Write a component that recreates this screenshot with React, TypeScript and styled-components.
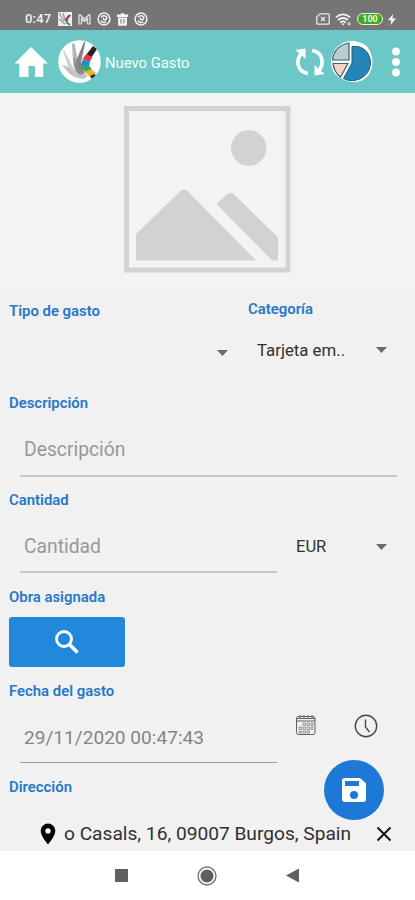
import React from "react";
import styled, { createGlobalStyle } from "styled-components";

const GlobalStyle = createGlobalStyle`
  * { box-sizing: border-box; }
  body { margin: 0; background: #fff; }
`;

const Screen = styled.div`
  width: 415px;
  height: 900px;
  display: flex;
  flex-direction: column;
  overflow: hidden;
  font-family: Roboto, "Liberation Sans", sans-serif;
  color: #303030;
`;

const StatusBar = styled.header`
  height: 30px;
  flex: none;
  background: #757575;
  color: #f4f4f4;
  display: flex;
  align-items: center;
  justify-content: space-between;
  padding: 8px 19px 0 25px;
`;

const StatusGroup = styled.div<{ $gap: number }>`
  display: flex;
  align-items: center;
  gap: ${(p) => p.$gap}px;
`;

const Clock = styled.span`
  font-size: 13px;
  font-weight: 500;
  letter-spacing: 0.2px;
  line-height: 16px;
  width: 27px;
  white-space: nowrap;
`;

const Battery = styled.span`
  width: 26px;
  height: 12px;
  border: 1.3px solid #e8f5e4;
  border-radius: 6px;
  background: #43a81b;
  background-clip: padding-box;
  color: #e8ffdc;
  font-size: 9px;
  font-weight: 700;
  line-height: 10px;
  text-align: center;
`;

const AppBar = styled.div`
  height: 63px;
  flex: none;
  background: #6cc8c6;
  display: flex;
  align-items: center;
  padding: 0 15px 0 14px;
`;

const Title = styled.h1`
  margin: 2px 0 0 4px;
  flex: 1;
  font-size: 14.8px;
  font-weight: 400;
  line-height: 20px;
  color: #f5fffe;
`;

const Form = styled.main`
  flex: 1;
  background: #f1f1f1;
  display: flex;
  flex-direction: column;
`;

const Photo = styled.div`
  height: 200px;
  flex: none;
  background: #f3f3f3;
  padding: 13px 0 0 124px;
`;

const Pair = styled.div`
  height: 99px;
  flex: none;
  display: grid;
  grid-template-columns: 239px 1fr;
`;

const Column = styled.div<{ $top: number }>`
  padding-top: ${(p) => p.$top}px;
`;

const Label = styled.div`
  height: 20px;
  padding-left: 9px;
  font-size: 14.9px;
  font-weight: 600;
  line-height: 22px;
  color: #2678cb;
`;

const Select = styled.div<{ $gap: number; $inset: number; $size: number }>`
  height: 22px;
  margin-top: ${(p) => p.$gap}px;
  padding: 0 ${(p) => p.$inset}px 0 18px;
  display: flex;
  align-items: center;
  justify-content: space-between;
  font-size: ${(p) => p.$size}px;
  line-height: 22px;
`;

const Section = styled.section<{ $height: number }>`
  height: ${(p) => p.$height}px;
  flex: none;
`;

const Row = styled.div`
  display: flex;
`;

const Input = styled.div<{ $width: number; $height?: number; $size?: number; $tone: string; $line: string; $thick: number }>`
  width: ${(p) => p.$width}px;
  height: ${(p) => p.$height ?? 65}px;
  flex: none;
  margin-left: 20px;
  padding: 27px 0 0 4px;
  border-bottom: ${(p) => p.$thick}px solid ${(p) => p.$line};
  font-size: ${(p) => p.$size ?? 19.3}px;
  line-height: 22px;
  color: ${(p) => p.$tone};
`;

const Currency = styled.div`
  flex: 1;
  padding: 5px 0 0 1px;
`;

const SearchButton = styled.button`
  width: 116px;
  height: 50px;
  margin: 11px 0 0 9px;
  padding: 0 0 1px;
  border: 0;
  border-radius: 3px;
  background: #2188db;
  display: flex;
  align-items: center;
  justify-content: center;
`;

const DateIcons = styled.div`
  flex: 1;
  display: flex;
  gap: 37px;
  padding: 14px 0 0 18px;
`;

const AddressArea = styled.section`
  flex: 1;
  position: relative;
`;

const Address = styled.div`
  height: 24px;
  margin-top: 26px;
  padding: 0 23px 0 40px;
  display: flex;
  align-items: center;
`;

const AddressText = styled.span`
  margin-left: 8px;
  flex: 1;
  font-size: 19.15px;
  line-height: 24px;
  white-space: nowrap;
`;

const SaveButton = styled.button`
  position: absolute;
  right: 31px;
  top: -16px;
  width: 60px;
  height: 60px;
  padding: 0;
  border: 0;
  border-radius: 50%;
  background: #1e78d8;
  display: flex;
  align-items: center;
  justify-content: center;
`;

const NavBar = styled.nav`
  height: 49px;
  flex: none;
  background: #fff;
  display: flex;
  align-items: center;
  padding-left: 115px;
`;

const Spacer = styled.span<{ $width: number }>`
  width: ${(p) => p.$width}px;
`;

const Caret = () => (
  <svg width="11" height="6" viewBox="0 0 11 6"><path d="M0 0h11L5.5 6z" fill="#6a6a6a" /></svg>
);

const MiniHand = () => (
  <svg width="14" height="14" viewBox="0 0 14 14">
    <rect width="14" height="14" fill="#eee" />
    <path d="M1 1l5 8M1 7l6 5M5 1l2 7" stroke="#999" strokeWidth="1.3" />
    <path d="M12 3L8 8" stroke="#333" strokeWidth="2" />
    <path d="M11 4L8 7" stroke="#d33" strokeWidth="2" />
    <path d="M7 8l3 1" stroke="#2486c8" strokeWidth="2" />
    <path d="M8 10l4 3" stroke="#3b9a55" strokeWidth="2" />
  </svg>
);

const Gmail = () => (
  <svg width="13" height="11" viewBox="0 0 13 11" fill="none" stroke="#e0e0e0" strokeWidth="1.3">
    <path d="M3.5 9.8H1V1h1.2l4.3 4L10.8 1H12v8.8H9.5M3.5 9.8V4.5l3 3 3-3v5.3" />
  </svg>
);

const Ring = () => (
  <svg width="14" height="14" viewBox="0 0 14 14" fill="none" stroke="#f2f2f2" strokeWidth="1.5">
    <circle cx="7" cy="7" r="5.9" />
    <path d="M4 5.3C5 3.5 8.5 3.2 9.6 5c.7 1.5-.6 2.9-2 2.9-1.3 0-1.6-1.500-.5-2M4 8.6c.6 1.8 3 2.6 5.300 1.500" />
  </svg>
);

const Trash = () => (
  <svg width="11" height="13" viewBox="0 0 11 13">
    <path d="M0 1.5h3.500L4 .3h3l.5 1.200H11V4H0zM1 4.500h9v7q0 1.200-1.200 1.200H2.200Q1 12.700 1 11.500z" fill="#f4f4f4" />
    <path d="M4 6v4.500M7 6v4.500" stroke="#757575" />
  </svg>
);

const NoSim = () => (
  <svg width="14" height="12" viewBox="0 0 14 12" fill="none" stroke="#ececec" strokeWidth="1.3">
    <path d="M4 .8h8.200q1 0 1 1v8.400q0 1-1 1H1.800q-1 0-1-1V4z" />
    <path d="M5 4l4 4M9 4L5 8" />
  </svg>
);

const Wifi = () => (
  <svg width="17" height="13" viewBox="0 0 17 13" fill="none" stroke="#f2f2f2" strokeWidth="1.7">
    <path d="M.8 4.300q7.200-6 14.400 0M3 7q5-4 10 0M5.300 9.500q2.700-2.200 5.400 0" />
    <path d="M6.300 10.500L8 12.500l1.700-2z" fill="#f2f2f2" stroke="none" />
    <circle cx="14.200" cy="10.800" r="1.200" strokeWidth="1" />
  </svg>
);

const Bolt = () => (
  <svg width="8" height="11" viewBox="0 0 8 11"><path d="M5 0L0 6.300h3.200L2.500 11 8 4.500H4.500z" fill="#f6f6f6" /></svg>
);

const Home = () => (
  <svg width="34" height="32" viewBox="0 0 34 32">
    <path d="M17 1L34 17.500h-4.800V31H21V20h-6.500v11H5.300V17.500H.5z" fill="#fff" />
  </svg>
);

const HandLogo = () => (
  <svg width="43" height="43" viewBox="0 0 43 43">
    <defs><clipPath id="disc"><circle cx="21.500" cy="21.500" r="21.300" /></clipPath></defs>
    <g clipPath="url(#disc)">
      <rect width="43" height="43" fill="#fdfdfd" />
      <path d="M5 11q1-1 2 1l9 17 12 5-2 3q-12 0-15-8z" fill="#d0d0d0" />
      <path d="M14 4q2-2 3 1l3 17 6 10-7 2-4-13z" fill="#b4b4b4" />
      <path d="M26 2q2-1 1 2l-4 18 4 11-8-2-1-10z" fill="#858585" />
      <path d="M4 25q3-1 12 6l14 4-4 4q-12-1-17-8z" fill="#c4c4c4" />
      <path d="M17 17q-1 11 10 16l-5 2q-8-6-6-16z" fill="#8b8b8b" />
      <path d="M35 6l4 3-6 9-5-3z" fill="#252426" />
      <path d="M28.500 14l6 3-3 5-7-3z" fill="#e3393c" />
      <path d="M24.500 19.500l7.500 2-1 5-8-1z" fill="#238ad0" />
      <path d="M22.500 25.500l8.500 0 3 4-6 3z" fill="#29a966" />
      <path d="M27 32l6-3 5 4-2 3-4 1z" fill="#edb331" />
      <path d="M32 36l5-2 1 3-4 2z" fill="#292326" />
    </g>
  </svg>
);

const Sync = () => (
  <svg width="30" height="30" viewBox="0 0 30 30" fill="none" stroke="#fff" strokeWidth="3.600">
    <path d="M13 26.500C1.500 25 .5 12 7 6M17 3.500C28.500 5 29.500 18 23 24" />
    <path d="M.5 3L10.500 1.500V12zM29.500 27L19.500 28.500V18z" fill="#fff" stroke="none" />
  </svg>
);

const Pie = () => (
  <svg width="44" height="44" viewBox="0 0 44 44">
    <path d="M20.500 1Q42 1 42.500 23C41 43 23 46 10.500 38 3 34 1 28 1 21.500 2 9 10 2 20.500 1z" fill="#fff" />
    <path d="M19 3V20H2.500Q4 6 19 3z" fill="#b9cfcb" stroke="#345f82" strokeWidth="1.200" />
    <path d="M3 23.500h15L10.500 37Q4 32 3 23.500z" fill="#f6d3c1" stroke="#345f82" strokeWidth="1.200" />
    <path d="M22 6.500C33 5 40.500 13 40.500 23 40 37 25 44.500 13.500 38.500L22 23z" fill="#2585b7" stroke="#215a86" />
  </svg>
);

const More = () => (
  <svg width="8" height="30" viewBox="0 0 8 30" fill="#fff">
    <circle cx="4" cy="4.500" r="3.900" /><circle cx="4" cy="15" r="3.900" /><circle cx="4" cy="25.500" r="3.900" />
  </svg>
);

const Placeholder = () => (
  <svg width="167" height="167" viewBox="0 0 167 167" fill="#d1d3d2">
    <rect x="2.500" y="2.500" width="161.500" height="161.500" fill="none" stroke="#d1d3d2" strokeWidth="5" />
    <circle cx="124.700" cy="42" r="17.800" />
    <path d="M12 128L56.500 85q3.500-3 7 0L132 154.500H12zM92.500 98L103.500 88q3-2.500 6 0L154 131.500v23h-6z" />
  </svg>
);

const Search = () => (
  <svg width="24" height="24" viewBox="0 0 24 24" fill="none" stroke="#fff">
    <circle cx="9" cy="9" r="7.500" strokeWidth="2.800" /><path d="M14 14l8.500 8.500" strokeWidth="3.500" />
  </svg>
);

const Calendar = () => (
  <svg width="22" height="22" viewBox="0 0 22 22" fill="none" stroke="#606060">
    <rect x="1.500" y="2.500" width="18.500" height="18" rx="2" />
    <path d="M1.500 7h18.500M2 4.500h18" strokeWidth="1.100" />
    <path d="M5 1v3M9 1v3M13 1v3M17 1v3" />
    <path d="M8 9h2.500v2.500H8zM12 9h2.500v2.500H12zM16 9h2v2.500h-2zM4 13h2.500v2.500H4zM8 13h2.500v2.500H8zM12 13h2.500v2.500H12zM16 13h2v2.500h-2zM4 17h2.500v2H4zM8 17h2.500v2H8zM12 17h2.500v2H12z" stroke="#858585" strokeWidth=".8" />
  </svg>
);

const TimeIcon = () => (
  <svg width="24" height="24" viewBox="0 0 24 24" fill="none" stroke="#484848" strokeWidth="1.400">
    <circle cx="12" cy="12" r="10.700" /><path d="M11.500 5.500V13l4 5" />
  </svg>
);

const Pin = () => (
  <svg width="16" height="22" viewBox="0 0 16 22">
    <path fillRule="evenodd" d="M8 .5a7.300 7.300 0 0 0-7.300 7.300C.7 13.500 8 21.500 8 21.500s7.300-8 7.300-13.700A7.300 7.300 0 0 0 8 .5zm0 4.700a2.700 2.700 0 1 1 0 5.400 2.700 2.700 0 0 1 0-5.400z" />
  </svg>
);

const Close = () => (
  <svg width="16" height="16" viewBox="0 0 16 16"><path d="M1.500 1.500l13 13M14.500 1.500l-13 13" stroke="#151515" strokeWidth="2" /></svg>
);

const Save = () => (
  <svg width="26" height="26" viewBox="0 0 26 26">
    <path d="M4 1h15l6 5.500V22q0 3-3 3H4q-3 0-3-3V4q0-3 3-3z" fill="#fff" />
    <path d="M4 4h14v5H4z" fill="#1e78d8" /><circle cx="13" cy="18" r="4" fill="#1e78d8" />
  </svg>
);

export default function App() {
  return (
    <>
      <GlobalStyle />
      <Screen>
        <StatusBar>
          <StatusGroup $gap={6}>
            <Clock>0:47</Clock>
            <MiniHand /><Gmail /><Ring /><Trash /><Ring />
          </StatusGroup>
          <StatusGroup $gap={5}>
            <NoSim /><Wifi /><Battery>100</Battery><Bolt />
          </StatusGroup>
        </StatusBar>
        <AppBar>
          <Home />
          <Spacer $width={10} />
          <HandLogo />
          <Title>Nuevo Gasto</Title>
          <Sync />
          <Spacer $width={5} />
          <Pie />
          <Spacer $width={18} />
          <More />
        </AppBar>
        <Form>
          <Photo><Placeholder /></Photo>
          <Pair>
            <Column $top={7}>
              <Label>Tipo de gasto</Label>
              <Select $gap={22} $inset={11} $size={17}><span /><Caret /></Select>
            </Column>
            <Column $top={5}>
              <Label>Categoría</Label>
              <Select $gap={21} $inset={28} $size={16.8}><span>Tarjeta em..</span><Caret /></Select>
            </Column>
          </Pair>
          <Section $height={97}>
            <Label>Descripción</Label>
            <Input $width={377} $tone="#989898" $line="#c5c8c7" $thick={2}>Descripción</Input>
          </Section>
          <Section $height={97}>
            <Label>Cantidad</Label>
            <Row>
              <Input $width={257} $height={64} $tone="#989898" $line="#c5c8c7" $thick={2}>Cantidad</Input>
              <Currency>
                <Select $gap={22} $inset={28} $size={16.5}><span>EUR</span><Caret /></Select>
              </Currency>
            </Row>
          </Section>
          <Section $height={94}>
            <Label>Obra asignada</Label>
            <SearchButton aria-label="Buscar"><Search /></SearchButton>
          </Section>
          <Section $height={96}>
            <Label>Fecha del gasto</Label>
            <Row>
              <Input $width={257} $height={63} $size={19.1} $tone="#858585" $line="#9a9f9e" $thick={1}>29/11/2020 00:47:43</Input>
              <DateIcons><Calendar /><TimeIcon /></DateIcons>
            </Row>
          </Section>
          <AddressArea>
            <Label>Dirección</Label>
            <Address><Pin /><AddressText>o Casals, 16, 09007 Burgos, Spain</AddressText><Close /></Address>
            <SaveButton aria-label="Guardar"><Save /></SaveButton>
          </AddressArea>
        </Form>
        <NavBar>
          <svg width="13" height="13"><rect width="13" height="13" fill="#606060" /></svg>
          <Spacer $width={69} />
          <svg width="20" height="20" viewBox="0 0 20 20"><circle cx="10" cy="10" r="9" fill="none" stroke="#737373" strokeWidth="1.400" /><circle cx="10" cy="10" r="6.500" fill="#5e5e5e" /></svg>
          <Spacer $width={69} />
          <svg width="13" height="15" viewBox="0 0 13 15"><path d="M0 7.500L13 .5v14z" fill="#5e5e5e" /></svg>
        </NavBar>
      </Screen>
    </>
  );
}
